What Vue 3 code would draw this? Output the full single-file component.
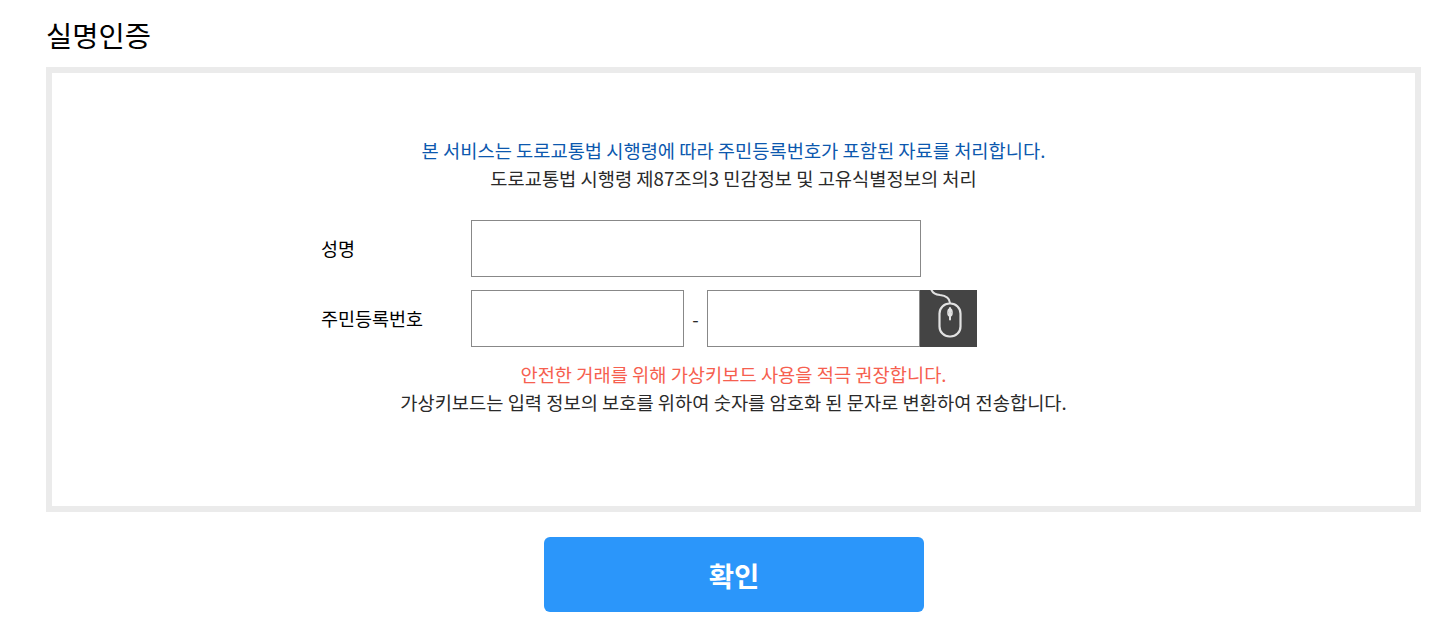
<script setup>
const noticeLines = [
  '안전한 거래를 위해 가상키보드 사용을 적극 권장합니다.',
  '가상키보드는 입력 정보의 보호를 위하여 숫자를 암호화 된 문자로 변환하여 전송합니다.',
]
</script>

<template>
  <div class="page">
    <h2 class="title">실명인증</h2>

    <div class="box">
      <p class="law law--blue">본 서비스는 도로교통법 시행령에 따라 주민등록번호가 포함된 자료를 처리합니다.</p>
      <p class="law">도로교통법 시행령 제87조의3 민감정보 및 고유식별정보의 처리</p>

      <div class="form">
        <div class="row">
          <label class="label">성명</label>
          <input class="input input--name" type="text" />
        </div>
        <div class="row">
          <label class="label">주민등록번호</label>
          <input class="input input--front" type="text" />
          <span class="dash">-</span>
          <input class="input input--back" type="password" />
          <button class="keypad" type="button" aria-label="가상키보드">
            <svg width="57" height="57" viewBox="0 0 57 57" fill="none" stroke="#e2e2e2" stroke-linecap="round">
              <path d="M11.500 0 C13 3.500 16 4.500 20 5 C26 5.500 29.500 7.500 30 13" stroke-width="2" />
              <rect x="19.500" y="13.500" width="21" height="33" rx="10" stroke-width="2.200" />
              <path d="M30 18 V29.500" stroke-width="2" />
              <ellipse cx="30" cy="22.500" rx="2" ry="3.500" stroke-width="1.600" />
            </svg>
          </button>
        </div>
      </div>

      <p class="law law--red">{{ noticeLines[0] }}</p>
      <p class="law">{{ noticeLines[1] }}</p>
    </div>

    <div class="actions">
      <button class="submit" type="button">확인</button>
    </div>
  </div>
</template>

<style scoped>
.page {
  width: 1375px;
  margin-left: 46px;
  font-family: "Noto Sans CJK KR", "Noto Sans", sans-serif;
  color: #2a2a2a;
}

.title {
  margin: 0;
  height: 67px;
  font-size: 28.500px;
  font-weight: 400;
  line-height: 70px;
  color: #000;
}

.box {
  box-sizing: border-box;
  height: 445px;
  border: 6px solid #ebebeb;
  padding-top: 63px;
}

.law {
  margin: 0;
  height: 28px;
  font-size: 18.720px;
  line-height: 28px;
  text-align: center;
}
.law--blue {
  color: #0c58ae;
}
.law--red {
  color: #f6604f;
}

.form {
  display: flex;
  flex-direction: column;
  gap: 13px;
  margin: 28px 0 13px 269px;
}

.row {
  display: flex;
  align-items: center;
  height: 57px;
}

.label {
  width: 150px;
  padding-bottom: 2px;
  font-size: 18.500px;
  color: #000;
}

.input {
  box-sizing: border-box;
  height: 57px;
  padding: 0 10px;
  border: 1px solid #888;
  border-radius: 0;
  background: #fff;
  outline: none;
}
.input--name {
  width: 450px;
}
.input--front {
  width: 213px;
}
.input--back {
  width: 213px;
}

.dash {
  width: 23px;
  font-size: 18.500px;
  text-align: center;
}

.keypad {
  width: 57px;
  height: 57px;
  padding: 0;
  border: 0;
  background: #444;
}
.keypad svg {
  display: block;
}

.actions {
  display: flex;
  justify-content: center;
  padding-top: 25px;
  margin-left: 1px;
}

.submit {
  width: 380px;
  height: 75px;
  border: 0;
  border-radius: 6px;
  background: #2b96fa;
  color: #fff;
  font-family: inherit;
  font-size: 27.500px;
  font-weight: 700;
}
</style>
